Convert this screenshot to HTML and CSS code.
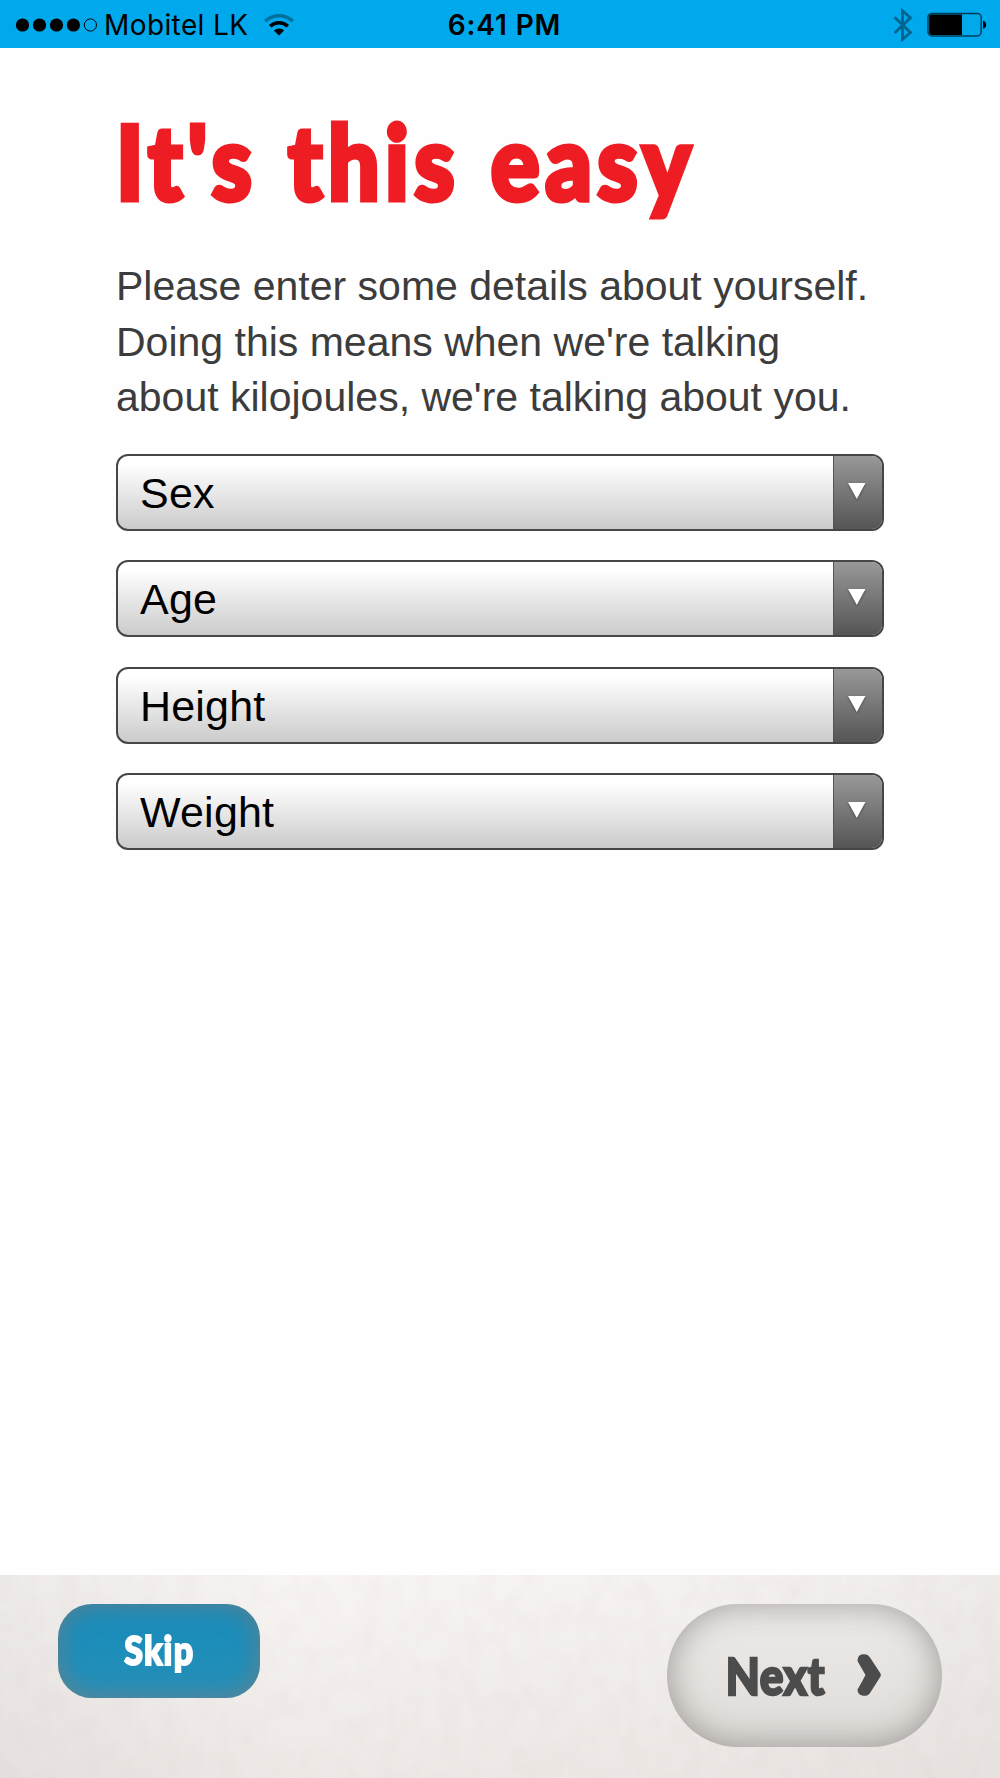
FILE: index.html
```html
<!DOCTYPE html>
<html lang="en">
<head>
  <title>It's this easy</title>
  <meta charset="UTF-8">
  <link rel="stylesheet" href="styles.css">
</head>
<body>
  <div class="status-bar">
    <div class="carrier">
      <svg class="signal" width="84" height="16" viewBox="0 0 84 16">
        <circle cx="7.5" cy="8" r="6.6"/>
        <circle cx="24.5" cy="8" r="6.6"/>
        <circle cx="41.5" cy="8" r="6.6"/>
        <circle cx="58.4" cy="8" r="6.6"/>
        <circle cx="75.4" cy="8" r="6.1" fill="none" stroke="#000" stroke-width="1"/>
      </svg>
      <span class="carrier-name">Mobitel LK</span>
      <svg class="wifi" width="30" height="22" viewBox="0 0 30 22">
        <path d="M1.2 7.2a20 20 0 0 1 27.6 0" fill="none" stroke="#006f9c" stroke-width="3.4"/>
        <path d="M6.2 12.2a12.8 12.8 0 0 1 17.6 0" fill="none" stroke="#000" stroke-width="3.6"/>
        <path d="M15 21.6l-5.1-5.1a7.4 7.4 0 0 1 10.2 0z"/>
      </svg>
    </div>
    <div class="clock">6:41 PM</div>
    <div class="indicators">
      <svg width="20" height="34" viewBox="0 0 20 34">
        <path d="M1.5 9.2l16 15.3-8 7V2.8l8 7-16 15.3" fill="none" stroke="#00658e" stroke-width="2.8"/>
      </svg>
      <svg width="60" height="26" viewBox="0 0 60 26">
        <rect x="1" y="1.4" width="53.2" height="22.6" rx="4" fill="none" stroke="#003e57" stroke-width="1.5"/>
        <path d="M4.5 2.5H35v20.4H4.5q-2.3 0-2.3-2.3V4.8q0-2.3 2.3-2.3z"/>
        <path d="M56 8.8q3.2.8 3.2 4T56 16.8z"/>
      </svg>
    </div>
  </div>

  <div class="content">
    <h1 class="title">It's this easy</h1>
    <p class="intro">Please enter some details about yourself.<br>Doing this means when we're talking<br>about kilojoules, we're talking about you.</p>
    <div class="fields">
      <div class="select">
        <span class="select-label">Sex</span>
        <span class="select-arrow"><svg width="18" height="17" viewBox="0 0 18 17"><path d="M0 0h17.5L8.8 16z"/></svg></span>
      </div>
      <div class="select">
        <span class="select-label">Age</span>
        <span class="select-arrow"><svg width="18" height="17" viewBox="0 0 18 17"><path d="M0 0h17.5L8.8 16z"/></svg></span>
      </div>
      <div class="select">
        <span class="select-label">Height</span>
        <span class="select-arrow"><svg width="18" height="17" viewBox="0 0 18 17"><path d="M0 0h17.5L8.8 16z"/></svg></span>
      </div>
      <div class="select">
        <span class="select-label">Weight</span>
        <span class="select-arrow"><svg width="18" height="17" viewBox="0 0 18 17"><path d="M0 0h17.5L8.8 16z"/></svg></span>
      </div>
    </div>
  </div>

  <div class="footer">
    <svg class="paper" width="1000" height="203">
      <filter id="grain" x="0" y="0" width="100%" height="100%">
        <feTurbulence type="fractalNoise" baseFrequency="0.05 0.035" numOctaves="3" seed="4"/>
        <feColorMatrix values="0 0 0 0 .5  0 0 0 0 .43  0 0 0 0 .42  .14 0 0 0 -.05"/>
      </filter>
      <rect width="1000" height="203" filter="url(#grain)"/>
    </svg>
    <button class="btn skip"><span>Skip</span></button>
    <button class="btn next">
      <span>Next</span>
      <svg width="26" height="44" viewBox="0 0 26 44">
        <path d="M1.5 8Q1.5 1.5 7 1.2Q12 .8 14 4.5L24.5 20.5Q25.3 22 24.5 23.5L14 40Q12 43.2 7 42.8Q1.5 42 1.5 36.5Q6 29 9.5 22Q6 16 1.5 8z"/>
      </svg>
    </button>
  </div>
</body>
</html>
```

FILE: styles.css
```css
* {
  box-sizing: border-box;
}

body {
  margin: 0;
  height: 1778px;
  display: flex;
  flex-direction: column;
  overflow: hidden;
  font-family: "Liberation Sans", Arial, sans-serif;
  background: #fefefe;
}

.status-bar {
  display: grid;
  grid-template-columns: 1fr auto 1fr;
  align-items: center;
  height: 48px;
  padding: 0 13px 0 15px;
  background: #00a9ec;
  font-family: Inter, sans-serif;
  font-size: 28px;
  line-height: 48px;
  color: #000;
}

.carrier,
.indicators {
  display: flex;
  align-items: center;
}

.carrier-name {
  margin: 1px 0 0 5px;
  letter-spacing: .4px;
}

.wifi {
  margin-left: 15px;
}

.clock {
  padding: 1px 0 0 7px;
  font-weight: 600;
  letter-spacing: .9px;
}

.indicators {
  justify-content: flex-end;
  gap: 14px;
}

.content {
  flex: 1;
  padding: 46px 116px 0;
}

.title {
  width: max-content;
  margin: 0;
  font-family: Lato, sans-serif;
  font-size: 103px;
  font-weight: 900;
  line-height: 132px;
  letter-spacing: 6.2px;
  word-spacing: 4px;
  color: #ee1d23;
  white-space: nowrap;
  transform: scaleX(.885);
  transform-origin: left;
  -webkit-text-stroke: 5px #ee1d23;
}

.intro {
  margin: 33px 0 0;
  font-size: 41px;
  line-height: 55.7px;
  color: #3c3c3c;
  white-space: nowrap;
}

.fields {
  display: flex;
  flex-direction: column;
  gap: 29.3px;
  margin-top: 28px;
}

.select {
  display: flex;
  height: 77px;
  border: 2.5px solid #464646;
  border-radius: 12px;
  overflow: hidden;
  background: linear-gradient(#fff 10%, #cbcbcb);
}

.select-label {
  flex: 1;
  padding-left: 22px;
  font-size: 43px;
  line-height: 75px;
  letter-spacing: .2px;
  color: #000;
}

.select-arrow {
  width: 49px;
  padding: 27px 0 0 14px;
  border-left: 1px solid #555;
  background: linear-gradient(#989898, #555);
  line-height: 0;
}

.select-arrow svg {
  fill: #fff;
  filter: drop-shadow(0 1px 1px #444);
}

.footer {
  position: relative;
  display: flex;
  justify-content: space-between;
  align-items: flex-start;
  height: 203px;
  padding: 29px 58px 0;
  background: linear-gradient(rgba(255, 255, 255, .2), rgba(222, 216, 213, .35)),
    linear-gradient(90deg, #e9e5e3, #f6f2ef 30%, #f3efec 65%, #ebe7e4);
}

/* paper grain */
.paper {
  position: absolute;
  inset: 0;
}

.btn {
  position: relative;
  display: flex;
  align-items: center;
  justify-content: center;
  padding: 0;
  border: none;
  font-family: Lato, sans-serif;
  font-weight: 900;
  white-space: nowrap;
}

.btn span {
  transform: scaleX(.85);
}

.skip {
  width: 202px;
  height: 94px;
  padding-bottom: 2px;
  border-radius: 34px;
  background: linear-gradient(#178bb9, #2590b9);
  box-shadow: inset 0 0 24px rgba(115, 125, 130, .85);
  font-size: 40px;
  letter-spacing: 1.4px;
  color: #fff;
  -webkit-text-stroke: 2px #fff;
}

.next {
  width: 275px;
  height: 143px;
  padding: 0 10px 1px 0;
  border-radius: 71px;
  gap: 23px;
  background: linear-gradient(#efebe9, #dedad7);
  box-shadow: inset 0 0 34px rgba(100, 100, 96, .6);
  font-size: 52px;
  letter-spacing: .6px;
  color: #4c4c4c;
  -webkit-text-stroke: 2.5px #4c4c4c;
}

.next svg {
  fill: #4c4c4c;
}
```
